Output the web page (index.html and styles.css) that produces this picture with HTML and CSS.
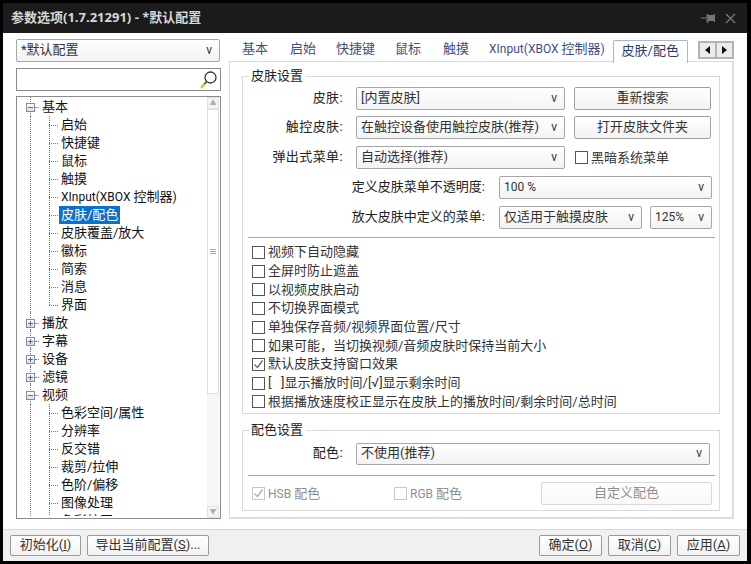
FILE: index.html
```html
<!DOCTYPE html>
<html lang="zh">
<head>
<meta charset="utf-8">
<title>参数选项</title>
<link rel="stylesheet" href="styles.css">
</head>
<body>
<div class="window">
  <header class="titlebar">
    <span class="title">参数选项(1.7.21291) - *默认配置</span>
    <div class="winbtns">
      <svg class="pin" width="15" height="11" viewBox="0 0 15 11"><path d="M0 5h6M6 1.500h1v8H6z" stroke="#777" fill="none"/><path d="M7 2h6v6H7z" fill="#777"/><path d="M13 1h1v8h-1z" fill="#777"/></svg>
      <svg class="close" width="11" height="11" viewBox="0 0 11 11"><path d="M1 1l9 9M10 1l-9 9" stroke="#777" stroke-width="1.400" fill="none"/></svg>
    </div>
  </header>
  <div class="client">
    <div class="main">
      <aside class="left">
        <div class="select profile"><span>*默认配置</span><i class="arrow">v</i></div>
        <div class="search">
          <svg width="19" height="20" viewBox="0 0 19 20"><circle cx="11.500" cy="7.500" r="5.500" fill="#fff" stroke="#333" stroke-width="1.300"/><path d="M7.500 11.800L2.500 17" stroke="#333" stroke-width="1.500"/><path d="M5.500 14L2 18" stroke="#e8c820" stroke-width="2.600"/></svg>
        </div>
        <div class="tree">
          <div class="tree-scroll">
            <div class="node root open"><b class="exp"><svg width="7" height="7" viewBox="0 0 7 7"><path d="M0 3.500h7" stroke="#2c3c78"/></svg></b><span>基本</span></div>
            <div class="kids">
              <div class="node"><span>启始</span></div>
              <div class="node"><span>快捷键</span></div>
              <div class="node"><span>鼠标</span></div>
              <div class="node"><span>触摸</span></div>
              <div class="node"><span><em class="lat">XInput(XBOX </em>控制器<em class="lat">)</em></span></div>
              <div class="node"><span class="sel">皮肤/配色</span></div>
              <div class="node"><span>皮肤覆盖/放大</span></div>
              <div class="node"><span>徽标</span></div>
              <div class="node"><span>简索</span></div>
              <div class="node"><span>消息</span></div>
              <div class="node"><span>界面</span></div>
            </div>
            <div class="node root"><b class="exp"><svg width="7" height="7" viewBox="0 0 7 7"><path d="M0 3.500h7M3.500 0v7" stroke="#2c3c78"/></svg></b><span>播放</span></div>
            <div class="node root"><b class="exp"><svg width="7" height="7" viewBox="0 0 7 7"><path d="M0 3.500h7M3.500 0v7" stroke="#2c3c78"/></svg></b><span>字幕</span></div>
            <div class="node root"><b class="exp"><svg width="7" height="7" viewBox="0 0 7 7"><path d="M0 3.500h7M3.500 0v7" stroke="#2c3c78"/></svg></b><span>设备</span></div>
            <div class="node root"><b class="exp"><svg width="7" height="7" viewBox="0 0 7 7"><path d="M0 3.500h7M3.500 0v7" stroke="#2c3c78"/></svg></b><span>滤镜</span></div>
            <div class="node root open"><b class="exp"><svg width="7" height="7" viewBox="0 0 7 7"><path d="M0 3.500h7" stroke="#2c3c78"/></svg></b><span>视频</span></div>
            <div class="kids">
              <div class="node"><span>色彩空间/属性</span></div>
              <div class="node"><span>分辨率</span></div>
              <div class="node"><span>反交错</span></div>
              <div class="node"><span>裁剪/拉伸</span></div>
              <div class="node"><span>色阶/偏移</span></div>
              <div class="node"><span>图像处理</span></div>
              <div class="node"><span>色彩校正</span></div>
            </div>
          </div>
          <div class="scrollbar">
            <div class="sb-btn">▲</div>
            <div class="sb-track"><div class="sb-thumb"><span class="grip"></span></div></div>
            <div class="sb-btn">▼</div>
          </div>
        </div>
      </aside>
      <section class="right">
        <nav class="tabs">
          <span class="tab wide">基本</span>
          <span class="tab">启始</span>
          <span class="tab">快捷键</span>
          <span class="tab wide">鼠标</span>
          <span class="tab">触摸</span>
          <span class="tab"><em class="lat">XInput(XBOX </em>控制器<em class="lat">)</em></span>
          <span class="tab active">皮肤/配色</span>
          <div class="spin">
            <span><svg width="5" height="8" viewBox="0 0 5 8"><path d="M5 0v8L0 4z" fill="#111"/></svg></span>
            <span><svg width="5" height="8" viewBox="0 0 5 8"><path d="M0 0v8l5-4z" fill="#111"/></svg></span>
          </div>
        </nav>
        <div class="panel">
          <div class="group skin">
            <span class="legend">皮肤设置</span>
            <div class="row">
              <label class="lab">皮肤:</label>
              <div class="select w209"><span>[内置皮肤]</span><i class="arrow">v</i></div>
              <div class="btn w137">重新搜索</div>
            </div>
            <div class="row">
              <label class="lab">触控皮肤:</label>
              <div class="select w209"><span>在触控设备使用触控皮肤(推荐)</span><i class="arrow">v</i></div>
              <div class="btn w137">打开皮肤文件夹</div>
            </div>
            <div class="row">
              <label class="lab">弹出式菜单:</label>
              <div class="select w209"><span>自动选择(推荐)</span><i class="arrow">v</i></div>
              <div class="check dark"><i class="box"></i><span>黑暗系统菜单</span></div>
            </div>
            <div class="row">
              <label class="lab2">定义皮肤菜单不透明度:</label>
              <div class="select w213"><span class="lat">100 %</span><i class="arrow">v</i></div>
            </div>
            <div class="row">
              <label class="lab2">放大皮肤中定义的菜单:</label>
              <div class="select w143"><span>仅适用于触摸皮肤</span><i class="arrow">v</i></div>
              <div class="select w62"><span class="lat">125%</span><i class="arrow">v</i></div>
            </div>
            <hr class="sep">
            <div class="checks">
              <div class="check"><i class="box"></i><span>视频下自动隐藏</span></div>
              <div class="check"><i class="box"></i><span>全屏时防止遮盖</span></div>
              <div class="check"><i class="box"></i><span>以视频皮肤启动</span></div>
              <div class="check"><i class="box"></i><span>不切换界面模式</span></div>
              <div class="check"><i class="box"></i><span>单独保存音频/视频界面位置/尺寸</span></div>
              <div class="check"><i class="box"></i><span>如果可能，当切换视频/音频皮肤时保持当前大小</span></div>
              <div class="check"><i class="box"><svg width="11" height="11" viewBox="0 0 11 11"><path d="M1.500 5.500l3 3 5-7" stroke="#666" stroke-width="1.300" fill="none"/></svg></i><span>默认皮肤支持窗口效果</span></div>
              <div class="check"><i class="box"></i><span>[&nbsp;&nbsp;&nbsp;]显示播放时间/[√]显示剩余时间</span></div>
              <div class="check"><i class="box"></i><span>根据播放速度校正显示在皮肤上的播放时间/剩余时间/总时间</span></div>
            </div>
          </div>
          <div class="group color">
            <span class="legend">配色设置</span>
            <div class="row">
              <label class="lab">配色:</label>
              <div class="select w354"><span>不使用(推荐)</span><i class="arrow">v</i></div>
            </div>
            <hr class="sep sep2">
            <div class="row last">
              <div class="check off hsb"><i class="box"><svg width="11" height="11" viewBox="0 0 11 11"><path d="M1.500 5.500l3 3 5-7" stroke="#aaa" stroke-width="1.300" fill="none"/></svg></i><span><em class="lat">HSB </em>配色</span></div>
              <div class="check off rgb"><i class="box"></i><span><em class="lat">RGB </em>配色</span></div>
              <div class="btn off custom">自定义配色</div>
            </div>
          </div>
        </div>
      </section>
    </div>
    <footer class="footer">
      <div class="btn f71"><span>初始化(<u>I</u>)</span></div>
      <div class="btn f122"><span>导出当前配置(<u>S</u>)...</span></div>
      <div class="spacer"></div>
      <div class="btn f63"><span>确定(<u>O</u>)</span></div>
      <div class="btn f63"><span>取消(<u>C</u>)</span></div>
      <div class="btn f63"><span>应用(<u>A</u>)</span></div>
    </footer>
  </div>
</div>
</body>
</html>
```
FILE: styles.css
```css
* { box-sizing: border-box; }
html, body { margin: 0; padding: 0; background: #000; }
body {
  width: 751px; height: 564px; overflow: hidden;
  font: 13px/18px Roboto, "Noto Sans CJK SC", sans-serif;
  color: #111;
}
.lat { font-style: normal; font-size: 12px; }
.window { width: 751px; height: 564px; padding: 3px 4px 3px 3px; display: flex; flex-direction: column; background: #000; }
.titlebar { height: 30px; flex: none; background: #1b1b1b; display: flex; align-items: center; padding: 0 11px 0 8px; justify-content: space-between; }
.title { color: #d8d8d8; font: 700 13px/18px "Open Sans", "Noto Sans CJK SC", sans-serif; padding-bottom: 3px; }
.winbtns { display: flex; align-items: center; gap: 9px; }
.winbtns svg { display: block; }
.client { flex: 1; background: #fff; display: flex; flex-direction: column; min-height: 0; }
.main { flex: 1; display: flex; min-height: 0; padding: 6px 0 10px 13px; }
.left { width: 205px; flex: none; display: flex; flex-direction: column; }
.select {
  display: flex; align-items: center; justify-content: space-between;
  height: 23px; border: 1px solid #a6a6a6; border-radius: 2px;
  background: linear-gradient(#fff, #f3f3f3); padding: 0 7px 2px 4px; color: #333; flex: none;
}
.select span { white-space: nowrap; }
.arrow { font-style: normal; font-size: 12px; color: #333; line-height: 14px; }
.profile { width: 204px; }
.search { height: 23px; margin-top: 6px; border: 1px solid #8c8c8c; display: flex; justify-content: flex-end; align-items: center; padding-right: 2px; flex: none; }
.search svg { display: block; }
.tree { margin-top: 5px; flex: 1; border: 1px solid #8c8c8c; display: flex; min-height: 0; overflow: hidden; }
.tree-scroll { flex: 1; overflow: hidden; min-width: 0; margin-bottom: 2px; padding-top: 1px; }
.node { height: 18px; display: flex; align-items: center; position: relative; white-space: nowrap; color: #111; }
.node span { display: block; height: 18px; line-height: 17px; padding: 0 2px; }
.root { padding-left: 9px; }
.root::before { content: ""; position: absolute; left: 13px; top: -2px; bottom: -2px; border-left: 1px dotted #777; }
.root::after { content: ""; position: absolute; left: 18px; top: 9px; width: 4px; border-top: 1px dotted #777; }
.exp {
  width: 9px; height: 9px; border: 1px solid #848ca0; background: linear-gradient(#fff, #d8dbe4);
  margin-right: 5px; display: flex; align-items: center; justify-content: center;
  position: relative; z-index: 1; flex: none;
}
.exp svg { display: block; width: 5px; height: 5px; }
.kids { position: relative; }
.kids::before { content: ""; position: absolute; left: 13px; top: 0; bottom: 0; border-left: 1px dotted #777; }
.kids::after { content: ""; position: absolute; left: 32px; top: 0; bottom: 9px; border-left: 1px dotted #777; }
.kids .node { padding-left: 42px; }
.kids .node::before { content: ""; position: absolute; left: 32px; top: 9px; width: 9px; border-top: 1px dotted #777; }
.node .sel { background: #0a72cc; color: #fff; }
.scrollbar { width: 12px; margin-right: 1px; flex: none; display: flex; flex-direction: column; background: #f6f6f6; }
.sb-btn { height: 12px; font-size: 7px; line-height: 11px; text-align: center; color: #b0b0b0; border: 1px solid #e2e2e2; background: #f4f4f4; flex: none; }
.sb-track { flex: 1; min-height: 0; }
.sb-thumb { height: 285px; background: #fff; border: 1px solid #dedede; display: flex; align-items: center; justify-content: center; }
.grip { width: 6px; height: 5px; border-top: 1px solid #aaa; border-bottom: 1px solid #aaa; background: linear-gradient(#fff 40%, #aaa 40%, #aaa 60%, #fff 60%); }
.right { flex: 1; display: flex; flex-direction: column; min-width: 0; padding-left: 8px; }
.tabs { height: 22px; display: flex; align-items: flex-start; position: relative; flex: none; margin-top: 1px; padding-left: 13px; }
.tab { color: #3f4d80; line-height: 18px; white-space: nowrap; margin-right: 20px; }
.tab.wide { margin-right: 22px; }
.tab.active { color: #2a3a6a; background: #fff; border: 1px solid #a9b6cf; border-bottom: none; height: 23px; margin-left: -12px; margin-right: 10px; text-align: center; position: relative; z-index: 1; width: 75px; border-radius: 2px 2px 0 0; line-height: 19px; }
.spin { display: flex; width: 36px; height: 18px; border: 2px solid #b4b4b4; background: #ececec; margin-top: 1px; }
.spin span { flex: 1; display: flex; align-items: center; justify-content: center; border-right: 2px solid #b4b4b4; }
.spin span:last-child { border-right: none; }
.spin svg { display: block; }
.panel { width: 505px; flex: 1; border: 1px solid #dcdcdc; border-right-width: 2px; border-bottom-width: 2px; padding: 14px 12px 6px; display: flex; flex-direction: column; gap: 16px; margin-top: -1px; }
.group { position: relative; border: 1px solid #d9d9d9; padding: 0 6px; width: 478px; }
.legend { position: absolute; left: 6px; top: -10px; background: #fff; padding: 0 3px 0 2px; color: #222; line-height: 17px; }
.skin { height: 338px; padding-top: 10px; }
.color { height: 81px; padding-top: 11px; }
.row { display: flex; align-items: center; height: 23px; margin-bottom: 7px; }
.row:first-of-type { margin-bottom: 6px; }
.lab { width: 107px; text-align: right; padding-right: 13px; padding-bottom: 2px; color: #222; flex: none; white-space: nowrap; letter-spacing: .4px; }
.lab2 { width: 250px; text-align: right; padding-right: 14px; padding-bottom: 2px; color: #222; flex: none; white-space: nowrap; }
.w209 { width: 209px; }
.w213 { width: 213px; }
.w143 { width: 143px; }
.w62 { width: 62px; margin-left: 8px; }
.w354 { width: 354px; height: 22px; }
.btn { height: 23px; display: flex; align-items: center; justify-content: center; border: 1px solid #a0a0a0; border-radius: 2px; background: linear-gradient(#fff, #f2f2f2); color: #333; white-space: nowrap; flex: none; padding-bottom: 2px; }
.w137 { width: 137px; margin-left: 9px; }
.check { display: flex; align-items: center; height: 18.7px; color: #333; white-space: nowrap; }
.check span { line-height: 18px; height: 18px; }
.box { width: 13px; height: 13px; border: 1px solid #555; background: #fff; display: flex; align-items: center; justify-content: center; margin-right: 3px; flex: none; }
.box svg { display: block; }
.dark { margin-left: 10px; }
.sep { border: none; border-top: 1px solid #a8a8a8; margin: 8px 0 5px -1px; height: 0; width: 467px; }
.sep2 { margin: 10px 0 6px -1px; }
.checks { margin-left: 3px; }
.row.last { margin-bottom: 0; }
.off { color: #8f8f8f; }
.off .box { border-color: #c8c8c8; }
.hsb { width: 142px; margin-left: 3px; }
.rgb { width: 147px; }
.custom { width: 171px; border-color: #d8d8d8; background: linear-gradient(#fff, #f8f8f8); color: #8f8f8f; }
.footer { height: 32px; flex: none; border-top: 1px solid #d8d8d8; background: #f0f0f0; display: flex; align-items: center; gap: 6px; padding: 0 7px; }
.spacer { flex: 1; }
.footer .btn { height: 21px; border-color: #9a9a9a; }
.f71 { width: 71px; }
.f122 { width: 122px; }
.f63 { width: 63px; }
```
